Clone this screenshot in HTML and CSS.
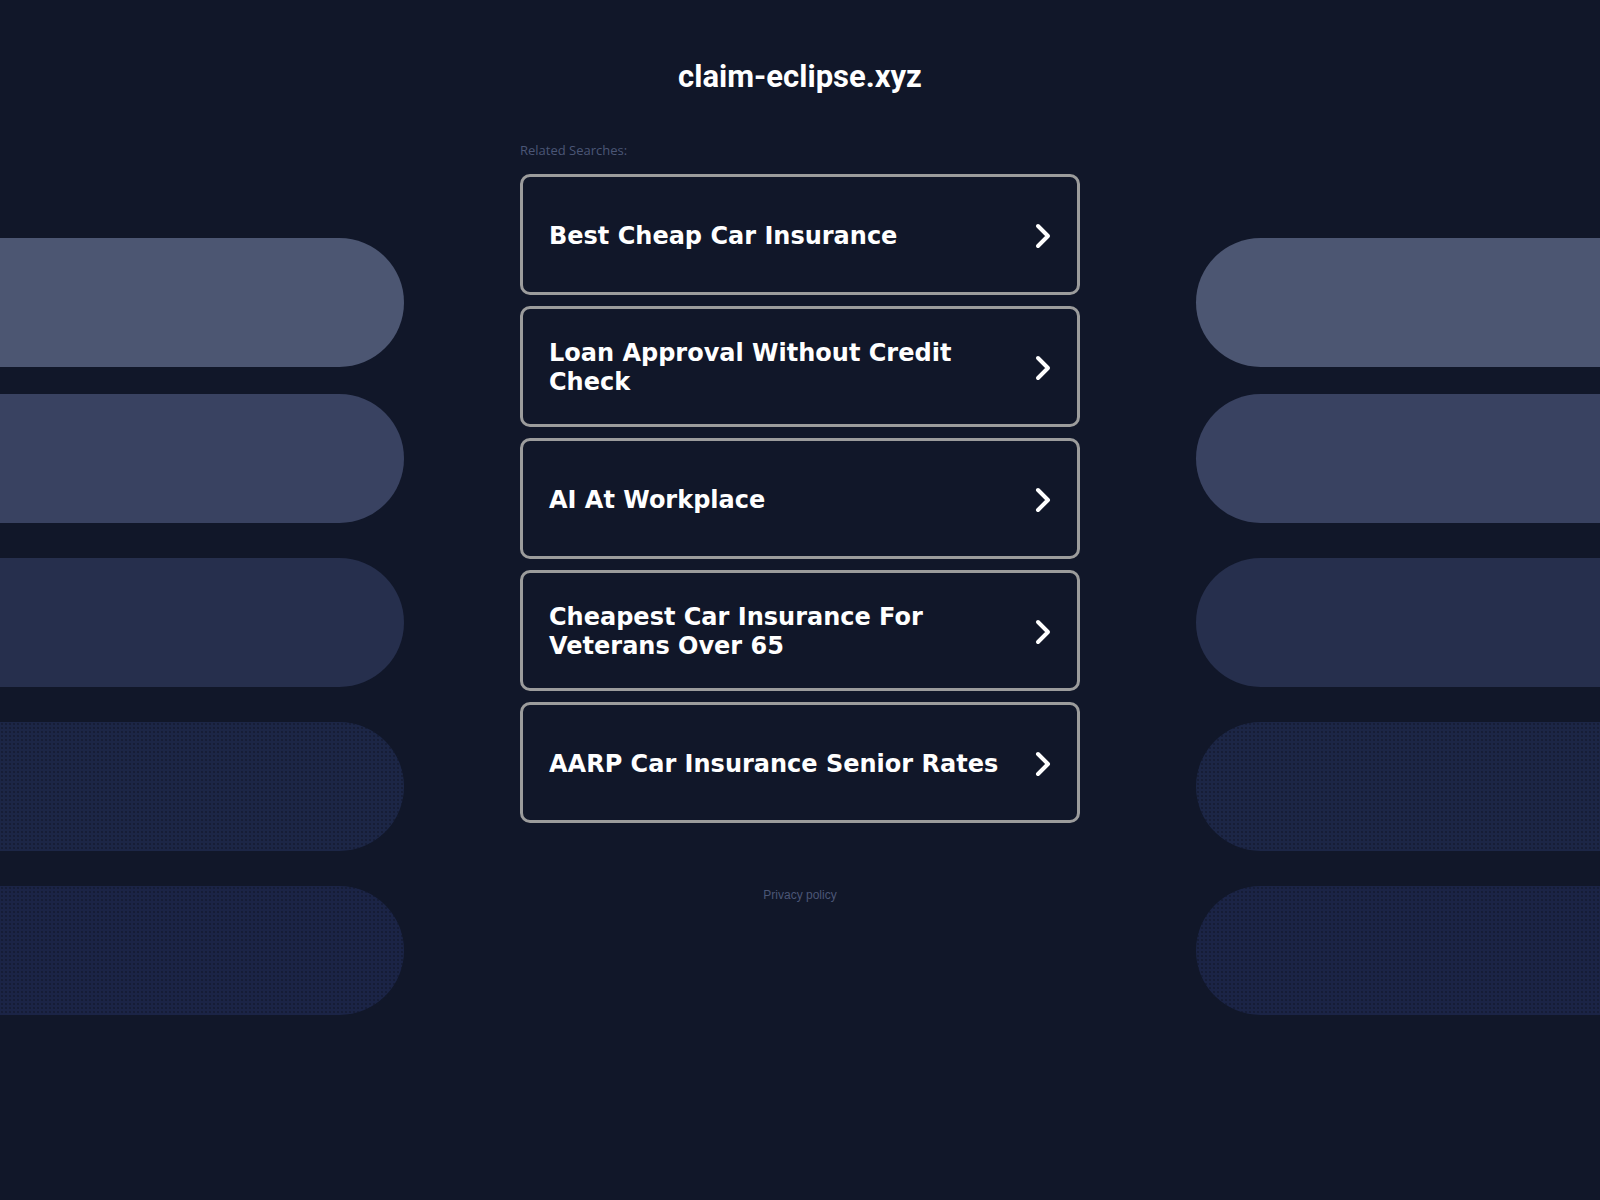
FILE: index.html
```html
<!DOCTYPE html>
<html lang="en">
<head>
<meta charset="utf-8">
<title>claim-eclipse.xyz</title>
<link rel="stylesheet" href="styles.css">
</head>
<body>
<div class="decor decor-left">
  <div class="pill p1"></div>
  <div class="pill p2"></div>
  <div class="pill p3"></div>
  <div class="pill p4 dotted"></div>
  <div class="pill p5 dotted"></div>
</div>
<div class="decor decor-right">
  <div class="pill p1"></div>
  <div class="pill p2"></div>
  <div class="pill p3"></div>
  <div class="pill p4 dotted"></div>
  <div class="pill p5 dotted"></div>
</div>
<main class="page">
  <h1 class="domain">claim-eclipse.xyz</h1>
  <div class="related">Related Searches:</div>
  <ul class="links">
    <li><a class="card" href="#"><span class="label">Best Cheap Car Insurance</span><svg class="chev" viewBox="0 0 16 26" width="16" height="26"><path d="M3 3 L13 13 L3 23" fill="none" stroke="#fff" stroke-width="4" stroke-linecap="round" stroke-linejoin="round"/></svg></a></li>
    <li><a class="card" href="#"><span class="label">Loan Approval Without Credit Check</span><svg class="chev" viewBox="0 0 16 26" width="16" height="26"><path d="M3 3 L13 13 L3 23" fill="none" stroke="#fff" stroke-width="4" stroke-linecap="round" stroke-linejoin="round"/></svg></a></li>
    <li><a class="card" href="#"><span class="label">AI At Workplace</span><svg class="chev" viewBox="0 0 16 26" width="16" height="26"><path d="M3 3 L13 13 L3 23" fill="none" stroke="#fff" stroke-width="4" stroke-linecap="round" stroke-linejoin="round"/></svg></a></li>
    <li><a class="card" href="#"><span class="label">Cheapest Car Insurance For Veterans Over 65</span><svg class="chev" viewBox="0 0 16 26" width="16" height="26"><path d="M3 3 L13 13 L3 23" fill="none" stroke="#fff" stroke-width="4" stroke-linecap="round" stroke-linejoin="round"/></svg></a></li>
    <li><a class="card" href="#"><span class="label">AARP Car Insurance Senior Rates</span><svg class="chev" viewBox="0 0 16 26" width="16" height="26"><path d="M3 3 L13 13 L3 23" fill="none" stroke="#fff" stroke-width="4" stroke-linecap="round" stroke-linejoin="round"/></svg></a></li>
  </ul>
  <div class="footer"><a href="#">Privacy policy</a></div>
</main>
</body>
</html>
```

FILE: styles.css
```css
html, body {
  margin: 0;
  padding: 0;
  background: #111729;
  min-height: 1200px;
}
body {
  position: relative;
  overflow: hidden;
  font-family: "Liberation Sans", Arial, sans-serif;
}

.decor {
  position: absolute;
  top: 238px;
  width: 404px;
  display: flex;
  flex-direction: column;
}
.decor-left { left: 0; }
.decor-right { right: 0; }

.pill {
  height: 129px;
  background: #4c5672;
}
.decor-left .pill { border-radius: 0 65px 65px 0; }
.decor-right .pill { border-radius: 65px 0 0 65px; }
.p1 { background: #4c5672; }
.p2 { background: #394261; margin-top: 27px; }
.p3 { background: #262f4d; margin-top: 35px; }
.p4 { background-color: #1c2646; margin-top: 35px; }
.p5 { background-color: #1b2446; margin-top: 35px; }
.dotted {
  background-image: radial-gradient(circle, rgba(17, 23, 41, 0.55) 0.8px, transparent 1.2px);
  background-size: 4px 4px;
}

.page {
  position: relative;
  width: 560px;
  margin: 0 auto;
  padding-top: 57px;
}

.domain {
  margin: 0;
  text-align: center;
  color: #ffffff;
  font-family: Roboto, "Liberation Sans", Arial, sans-serif;
  font-weight: 700;
  font-size: 31px;
  line-height: 40px;
}

.related {
  margin-top: 44px;
  font-family: "Open Sans", "Noto Sans", sans-serif;
  font-size: 13px;
  line-height: 18px;
  color: #4b5676;
}

.links {
  list-style: none;
  margin: 15px 0 0;
  padding: 0;
  display: flex;
  flex-direction: column;
  gap: 11px;
}

.card {
  box-sizing: border-box;
  height: 121px;
  display: flex;
  align-items: center;
  justify-content: space-between;
  border: 3px solid #9c9c9c;
  border-radius: 10px;
  padding: 3px 26px 0 26px;
  text-decoration: none;
  color: #ffffff;
  background: #111729;
}

.label {
  font-family: "DejaVu Sans", Verdana, sans-serif;
  font-weight: 700;
  font-size: 24px;
  line-height: 29px;
  max-width: 470px;
}

.chev {
  flex: none;
  display: block;
}

.footer {
  margin-top: 64px;
  text-align: center;
  font-size: 12px;
  line-height: 16px;
}
.footer a {
  color: #4b5676;
  text-decoration: none;
}
```
